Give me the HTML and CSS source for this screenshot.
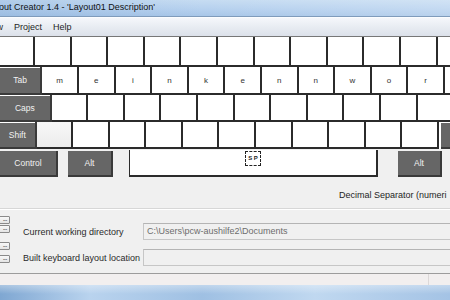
FILE: index.html
```html
<!DOCTYPE html>
<html lang="en">
<head>
  <meta charset="UTF-8">
  <title>Keyboard Layout Creator 1.4</title>
  <link rel="stylesheet" href="styles.css">
</head>
<body>
  <div class="window">
    <div class="titlebar">out Creator 1.4 - 'Layout01 Description'</div>
    <div class="menubar">
      <span class="menu cut">w</span>
      <span class="menu">Project</span>
      <span class="menu">Help</span>
    </div>

    <div class="keyboard">
      <div class="row row-num">
        <div class="key"></div><div class="key"></div><div class="key"></div><div class="key"></div>
        <div class="key"></div><div class="key"></div><div class="key"></div><div class="key"></div>
        <div class="key"></div><div class="key"></div><div class="key"></div><div class="key"></div>
        <div class="key"></div>
      </div>
      <div class="row row-tab">
        <div class="key mod tab">Tab</div>
        <div class="key">m</div><div class="key">e</div><div class="key">i</div><div class="key">n</div>
        <div class="key">k</div><div class="key">e</div><div class="key">n</div><div class="key">n</div>
        <div class="key">w</div><div class="key">o</div><div class="key">r</div><div class="key"></div>
      </div>
      <div class="row row-caps">
        <div class="key mod caps">Caps</div>
        <div class="key"></div><div class="key"></div><div class="key"></div><div class="key"></div>
        <div class="key"></div><div class="key"></div><div class="key"></div><div class="key"></div>
        <div class="key"></div><div class="key"></div><div class="key"></div>
      </div>
      <div class="row row-shift">
        <div class="key mod shift">Shift</div>
        <div class="key oem"></div><div class="key"></div><div class="key"></div><div class="key"></div>
        <div class="key"></div><div class="key"></div><div class="key"></div><div class="key"></div>
        <div class="key"></div><div class="key"></div><div class="key"></div>
        <div class="key mod rshift"></div>
      </div>
      <div class="row row-space">
        <div class="key mod ctrl">Control</div>
        <div class="key mod alt">Alt</div>
        <div class="key space"><span class="sp">S P</span></div>
        <div class="key mod altgr">Alt</div>
      </div>
    </div>

    <div class="options">Decimal Separator (numeri</div>
    <div class="divider"></div>

    <div class="paths">
      <div class="btns">
        <div class="dots">...</div>
        <div class="dots">...</div>
        <div class="dots">...</div>
        <div class="dots">...</div>
      </div>
      <div class="fields">
        <div class="field">
          <span class="label">Current working directory</span>
          <div class="textbox">C:\Users\pcw-aushilfe2\Documents</div>
        </div>
        <div class="field">
          <span class="label">Built keyboard layout location</span>
          <div class="textbox"></div>
        </div>
      </div>
    </div>

    <div class="statusbar">
      <div class="status-cell"></div>
      <div class="status-cell grip"></div>
    </div>
    <div class="frame"></div>
  </div>
</body>
</html>
```

FILE: styles.css
```css
body {
  margin: 0;
  width: 450px;
  height: 300px;
  overflow: hidden;
  background: #f0f0f0;
  font-family: 'Liberation Sans', Arial, sans-serif;
  font-size: 9px;
  color: #1e1e1e;
}

.window {
  width: 450px;
  white-space: nowrap;
}

.titlebar {
  height: 16px;
  line-height: 15px;
  border-bottom: 1px solid #7f9bbb;
  background:
    linear-gradient(to right, rgba(120, 160, 205, 0.25), rgba(255, 255, 255, 0) 45%, rgba(255, 255, 255, 0.2)),
    linear-gradient(to bottom, #c6dcf2, #b5d0ee 60%, #a8c6e8);
  color: #111;
  margin-left: -1px;
}

.menubar {
  display: flex;
  gap: 11px;
  height: 20px;
  line-height: 19px;
  box-sizing: border-box;
  border-top: 1px solid #fbfcfe;
  border-bottom: 1px solid #777;
  background: linear-gradient(#f5f7fb, #e8ecf2 50%, #dce1ea);
  color: #1e1e1e;
}

.menu.cut {
  margin-left: -3.5px;
}

/* keyboard */
.keyboard {
  background: #fff;
}

.row {
  display: flex;
  height: 27px;
}

.row-num {
  height: 30px;
  margin-left: -1.6px;
}

.row-tab {
  height: 28px;
}

.key {
  flex: none;
  width: 36.6px;
  box-sizing: border-box;
  border-right: 2px solid #2b2b2b;
  border-bottom: 2px solid #2b2b2b;
  background: #fff;
  display: flex;
  align-items: center;
  justify-content: center;
  font-size: 8px;
  color: #333;
}

.key.oem {
  background: linear-gradient(#f7f7f7, #ececec);
}

.key.mod {
  background: #666;
  border-color: #3a3a3a;
  color: #f2f2f2;
  font-size: 8.5px;
  box-shadow: inset 0 1px 0 #fff;
}

.tab { width: 42.4px; }
.caps { width: 51.7px; }
.shift { width: 36.5px; }

.rshift {
  margin-left: 2px;
  width: 40px;
}

.row-space {
  height: 28px;
  padding-top: 1px;
  box-sizing: border-box;
  background: #f0f0f0;
}

.row-space .key {
  height: 27px;
}

.row-space .key.mod {
  margin-top: 1px;
  height: 26px;
  box-shadow: none;
}

.ctrl { width: 58px; }

.alt {
  margin-left: 10px;
  width: 45px;
}

.space {
  margin-left: 16px;
  width: 249px;
  border-left: 1px solid #2b2b2b;
  align-items: flex-start;
}

.sp {
  margin-top: 1px;
  width: 16px;
  height: 15px;
  box-sizing: border-box;
  border: 1px dashed #222;
  font-size: 6px;
  font-weight: bold;
  line-height: 13px;
  text-align: center;
  color: #222;
}

.altgr {
  margin-left: 20px;
  width: 44px;
}

/* lower panel */
.options {
  height: 31px;
  box-sizing: border-box;
  padding: 13px 0 0 339px;
  line-height: 10px;
}

.divider {
  height: 1px;
  background: #d7d7d7;
  border-bottom: 1px solid #fff;
}

.paths {
  display: flex;
  height: 63px;
}

.btns {
  flex: none;
  width: 14px;
  margin-left: -4px;
  display: flex;
  flex-direction: column;
}

.dots {
  height: 8px;
  box-sizing: border-box;
  border: 1px solid #8a8a8a;
  border-radius: 1px;
  background: linear-gradient(#f8f8f8, #e4e4e4);
  font-size: 7px;
  line-height: 3px;
  text-align: right;
  padding-right: 2px;
  letter-spacing: -0.5px;
  color: #222;
}

.dots:nth-child(1) { margin-top: 6px; }
.dots:nth-child(2) { margin-top: 1px; }
.dots:nth-child(3) { margin-top: 9px; }
.dots:nth-child(4) { margin-top: 5px; }

.fields {
  flex: none;
  margin-left: 13px;
  padding-top: 13px;
  display: flex;
  flex-direction: column;
  gap: 9px;
}

.field {
  display: flex;
  align-items: center;
  height: 17px;
}

.label {
  flex: none;
  width: 120px;
  color: #2a2a2a;
}

.textbox {
  flex: none;
  width: 320px;
  height: 17px;
  box-sizing: border-box;
  border: 1px solid #c6c6c6;
  border-top-color: #b4b4b4;
  background: #f0f0f0;
  color: #6d6d6d;
  padding-left: 3px;
  line-height: 15px;
}

.statusbar {
  display: flex;
  height: 11px;
  border-top: 1px solid #9c9c9c;
  background: #f2efef;
}

.status-cell {
  width: 428px;
  border-right: 1px solid #dcd8d8;
}

.status-cell.grip {
  width: auto;
  flex: 1;
  border: none;
}

.frame {
  height: 15px;
  background:
    linear-gradient(to bottom, rgba(255, 255, 255, 0.35), rgba(255, 255, 255, 0) 60%),
    linear-gradient(to right, #7fa7d2, #b9d3ee 20%, #9fc0e3 45%, #c0d8f0 70%, #a4c3e5);
}
```
